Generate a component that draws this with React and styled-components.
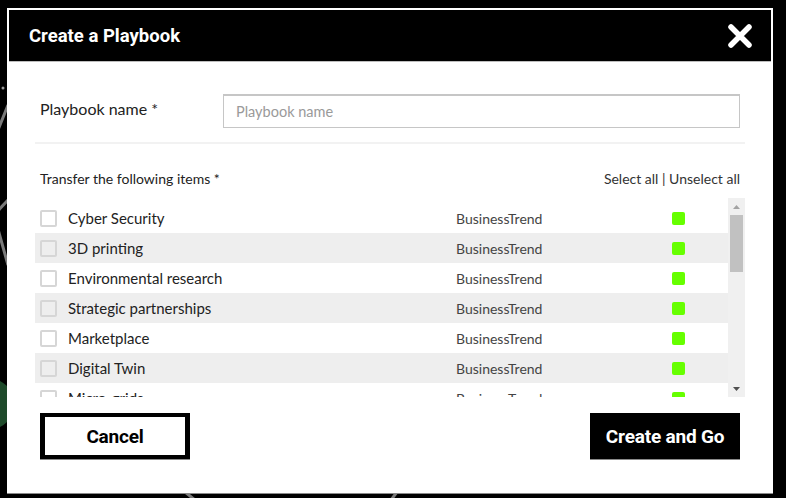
import React, { useState, useRef, useLayoutEffect } from "react";
import styled, { createGlobalStyle } from "styled-components";

const GlobalStyle = createGlobalStyle`
  html, body {
    margin: 0;
    padding: 0;
    background: #000;
  }
  * {
    box-sizing: border-box;
  }
  body {
    font-family: Lato, "Open Sans", Arial, sans-serif;
    color: #222;
  }
`;

const Page = styled.div`
  position: relative;
  width: 786px;
  height: 498px;
  overflow: hidden;
  padding: 8px 0 0 7px;
  background: #000;
`;

const Backdrop = styled.svg`
  position: absolute;
  inset: 0;
  width: 786px;
  height: 498px;
`;

const Modal = styled.div`
  position: relative;
  width: 766px;
  background: #fff;
  padding: 2px;
  display: flex;
  flex-direction: column;
  box-shadow: 0 1px 0 #8a8a8a;
`;

const Header = styled.div`
  height: 51px;
  background: #000;
  display: flex;
  align-items: center;
  justify-content: space-between;
  padding: 0 18px 0 20px;
  border-bottom: 1px solid #bdbdbd;
  box-sizing: content-box;
`;

const Title = styled.h1`
  margin: 0;
  color: #fff;
  font-family: Roboto, Arial, sans-serif;
  font-size: 18.5px;
  font-weight: 700;
  letter-spacing: 0;
`;

const CloseButton = styled.button`
  border: 0;
  background: transparent;
  padding: 0;
  width: 26px;
  height: 26px;
  cursor: pointer;
  display: flex;
`;

const Body = styled.div`
  padding: 32px 26px 32px;
  display: flex;
  flex-direction: column;
`;

const FormRow = styled.div`
  display: flex;
  align-items: center;
  padding: 0 5px;
`;

const Label = styled.label`
  width: 183px;
  font-size: 16px;
  margin-top: -5px;
  color: #222;
`;

const TextInput = styled.input`
  flex: 1;
  height: 34px;
  border: 1px solid #c6c6c6;
  border-top-width: 2px;
  padding: 0 12px;
  font-family: inherit;
  font-size: 14.5px;
  color: #222;
  outline: none;
  &::placeholder {
    color: #9a9a9a;
  }
`;

const Divider = styled.div`
  margin-top: 14px;
  height: 2px;
  background: #f2f2f2;
`;

const ItemsHeader = styled.div`
  margin-top: 27px;
  display: flex;
  justify-content: space-between;
  padding: 0 5px;
  font-size: 14px;
  line-height: 16px;
  color: #222;
`;

const Links = styled.div`
  color: #333;
  span {
    cursor: pointer;
  }
`;

const ListWrap = styled.div`
  margin-top: 11px;
  height: 199px;
  display: flex;
`;

const Viewport = styled.div`
  flex: 1;
  overflow-y: auto;
  padding-top: 5px;
  scrollbar-width: none;
  &::-webkit-scrollbar {
    display: none;
  }
`;

const ScrollBar = styled.div`
  width: 17px;
  background: #f0f0f0;
  display: flex;
  flex-direction: column;
`;

const ArrowButton = styled.div`
  height: 17px;
  display: flex;
  align-items: center;
  justify-content: center;
`;

const Track = styled.div`
  position: relative;
  flex: 1;
`;

const Thumb = styled.div`
  position: absolute;
  left: 2px;
  right: 2px;
  background: #c1c1c1;
`;

const Row = styled.div`
  height: 30px;
  display: grid;
  grid-template-columns: 17px 377px 205px 1fr;
  column-gap: 11px;
  align-items: center;
  padding-left: 5px;
  background: ${({ $striped }) => ($striped ? "#eeeeee" : "#fff")};
`;

const Check = styled.input`
  appearance: none;
  margin: 0;
  width: 17px;
  height: 17px;
  border: 2px solid #d6d6d6;
  border-radius: 2px;
  background: transparent;
  cursor: pointer;
  &:checked {
    background: #000;
    border-color: #000;
  }
`;

const Name = styled.span`
  font-size: 15px;
  color: #222;
  white-space: nowrap;
`;

const Type = styled.span`
  font-size: 14px;
  color: #444;
`;

const Status = styled.span`
  width: 13px;
  height: 13px;
  border-radius: 2px;
  background: ${({ $color }) => $color};
`;

const Footer = styled.div`
  margin-top: 16px;
  display: flex;
  justify-content: space-between;
  padding: 0 5px;
`;

const Button = styled.button`
  width: 150px;
  height: 46px;
  font-family: Roboto, Arial, sans-serif;
  font-size: 19px;
  font-weight: 700;
  letter-spacing: -0.2px;
  cursor: pointer;
  border: ${({ $primary }) => ($primary ? "0" : "5px solid #000")};
  border-top-width: ${({ $primary }) => ($primary ? "0" : "4px")};
  border-bottom-width: ${({ $primary }) => ($primary ? "0" : "4px")};
  background: ${({ $primary }) => ($primary ? "#000" : "#fff")};
  color: ${({ $primary }) => ($primary ? "#fff" : "#000")};
  box-shadow: 0 1px 0 #8a8a8a;
`;

const items = [
  "Cyber Security",
  "3D printing",
  "Environmental research",
  "Strategic partnerships",
  "Marketplace",
  "Digital Twin",
  "Micro-grids",
  "Blockchain",
  "Artificial intelligence",
  "Smart cities",
  "Circular economy",
  "Edge computing",
  "Renewable energy",
  "Quantum computing",
  "Remote work",
  "Autonomous vehicles",
  "Data privacy",
  "Robotics",
  "Hydrogen economy",
];

const App = () => {
  const [checked, setChecked] = useState({});
  const [name, setName] = useState("");
  const [thumb, setThumb] = useState({ top: 0, height: 57 });
  const viewRef = useRef(null);
  const trackRef = useRef(null);

  const updateThumb = () => {
    const view = viewRef.current;
    const track = trackRef.current;
    if (!view || !track) return;
    const trackH = track.clientHeight;
    const height = Math.max(20, (trackH * view.clientHeight) / view.scrollHeight);
    const maxScroll = view.scrollHeight - view.clientHeight || 1;
    const top = ((trackH - height) * view.scrollTop) / maxScroll;
    setThumb({ top, height });
  };

  useLayoutEffect(updateThumb, []);

  const setAll = (value) => {
    const next = {};
    items.forEach((item) => (next[item] = value));
    setChecked(next);
  };

  return (
    <Page>
      <GlobalStyle />
      <Backdrop viewBox="0 0 786 498">
        <g stroke="#7a7a7a" strokeWidth="3" fill="none">
          <line x1="-10" y1="150" x2="8" y2="105" />
          <line x1="-20" y1="230" x2="8" y2="200" />
          <line x1="-4" y1="222" x2="8" y2="265" />
          <line x1="180" y1="488" x2="200" y2="504" />
          <line x1="388" y1="504" x2="400" y2="488" />
        </g>
        <circle cx="3" cy="88" r="1.5" fill="#9a9a9a" />
        <circle cx="-12" cy="404" r="26" fill="#1e4a2a" />
      </Backdrop>
      <Modal>
        <Header>
          <Title>Create a Playbook</Title>
          <CloseButton aria-label="Close">
            <svg width="26" height="26" viewBox="0 0 26 26">
              <path
                d="M4 4L22 22M22 4L4 22"
                stroke="#fff"
                strokeWidth="5.5"
                strokeLinecap="round"
              />
            </svg>
          </CloseButton>
        </Header>
        <Body>
          <FormRow>
            <Label htmlFor="pb-name">Playbook name *</Label>
            <TextInput
              id="pb-name"
              placeholder="Playbook name"
              value={name}
              onChange={(e) => setName(e.target.value)}
            />
          </FormRow>
          <Divider />
          <ItemsHeader>
            <span>Transfer the following items *</span>
            <Links>
              <span onClick={() => setAll(true)}>Select all</span> |{" "}
              <span onClick={() => setAll(false)}>Unselect all</span>
            </Links>
          </ItemsHeader>
          <ListWrap>
            <Viewport ref={viewRef} onScroll={updateThumb}>
              {items.map((item, i) => (
                <Row key={item} $striped={i % 2 === 1}>
                  <Check
                    type="checkbox"
                    checked={!!checked[item]}
                    onChange={() =>
                      setChecked({ ...checked, [item]: !checked[item] })
                    }
                  />
                  <Name>{item}</Name>
                  <Type>BusinessTrend</Type>
                  <Status $color="#66ff00" />
                </Row>
              ))}
            </Viewport>
            <ScrollBar>
              <ArrowButton>
                <svg width="7" height="4" viewBox="0 0 7 4">
                  <path d="M0 4L3.5 0L7 4Z" fill="#a3a3a3" />
                </svg>
              </ArrowButton>
              <Track ref={trackRef}>
                <Thumb style={{ top: thumb.top, height: thumb.height }} />
              </Track>
              <ArrowButton>
                <svg width="7" height="4" viewBox="0 0 7 4">
                  <path d="M0 0L7 0L3.5 4Z" fill="#505050" />
                </svg>
              </ArrowButton>
            </ScrollBar>
          </ListWrap>
          <Footer>
            <Button>Cancel</Button>
            <Button $primary>Create and Go</Button>
          </Footer>
        </Body>
      </Modal>
    </Page>
  );
};

export default App;
